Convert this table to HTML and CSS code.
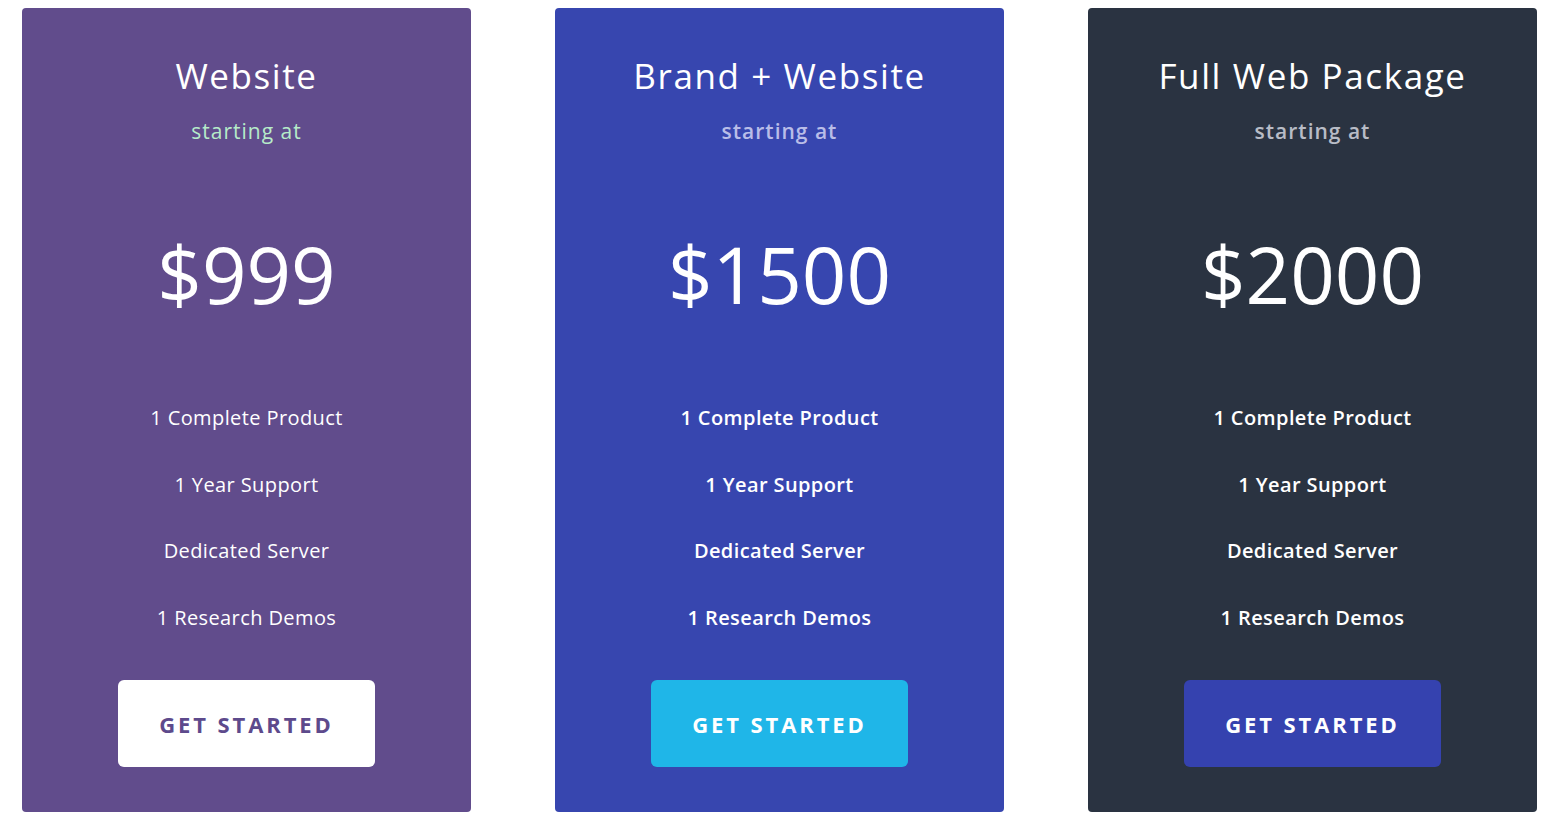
FILE: index.html
```html
<!DOCTYPE html>
<html>
<head>
<meta charset="utf-8">
<link rel="stylesheet" href="styles.css">
</head>
<body>
<div class="pricing">
  <div class="card card-purple">
    <h2 class="title">Website</h2>
    <div class="starting">starting at</div>
    <div class="price">$999</div>
    <ul class="features">
      <li>1 Complete Product</li>
      <li>1 Year Support</li>
      <li>Dedicated Server</li>
      <li>1 Research Demos</li>
    </ul>
    <a class="btn">GET STARTED</a>
  </div>
  <div class="card card-blue">
    <h2 class="title">Brand + Website</h2>
    <div class="starting">starting at</div>
    <div class="price">$1500</div>
    <ul class="features">
      <li>1 Complete Product</li>
      <li>1 Year Support</li>
      <li>Dedicated Server</li>
      <li>1 Research Demos</li>
    </ul>
    <a class="btn">GET STARTED</a>
  </div>
  <div class="card card-dark">
    <h2 class="title">Full Web Package</h2>
    <div class="starting">starting at</div>
    <div class="price">$2000</div>
    <ul class="features">
      <li>1 Complete Product</li>
      <li>1 Year Support</li>
      <li>Dedicated Server</li>
      <li>1 Research Demos</li>
    </ul>
    <a class="btn">GET STARTED</a>
  </div>
</div>
</body>
</html>
```
FILE: styles.css
```css
html, body {
  margin: 0;
  padding: 0;
  background: #ffffff;
}
.pricing {
  display: flex;
  gap: 84px;
  padding: 8px 0 0 22px;
}
.card {
  width: 449px;
  height: 804px;
  border-radius: 4px;
  display: flex;
  flex-direction: column;
  align-items: center;
  color: #ffffff;
  box-sizing: border-box;
}
.card-purple { background: #614c8c; }
.card-blue { background: #3746af; }
.card-dark { background: #2a3341; }
.title {
  margin: 48px 0 0;
  font-family: "Open Sans", sans-serif;
  font-weight: 400;
  font-size: 35px;
  line-height: 40px;
  letter-spacing: 1.6px;
}
.starting {
  margin-top: 22px;
  font-family: "Open Sans", sans-serif;
  font-size: 21px;
  line-height: 26px;
  letter-spacing: 1px;
}
.card-purple .starting { color: #b6ebc9; }
.card-blue .starting { color: #b9bde8; font-weight: 600; }
.card-dark .starting { color: #b8bcc6; font-weight: 600; }
.price {
  margin-top: 85px;
  font-family: "Open Sans", sans-serif;
  font-size: 78px;
  line-height: 90px;
  font-weight: 400;
}
.features {
  list-style: none;
  margin: 85px 0 0;
  padding: 0;
  display: flex;
  flex-direction: column;
  align-items: center;
  gap: 39.7px;
  font-family: "Open Sans", sans-serif;
  font-size: 20px;
  line-height: 27px;
  letter-spacing: 0.4px;
}
.card-blue .features, .card-dark .features { font-weight: 600; }
.btn {
  margin-top: 49px;
  width: 257px;
  height: 87px;
  border-radius: 6px;
  display: flex;
  align-items: center;
  justify-content: center;
  font-family: "Open Sans", sans-serif;
  font-weight: 700;
  font-size: 22px;
  letter-spacing: 2.9px;
  box-sizing: border-box;
}
.card-purple .btn { background: #ffffff; color: #5d4a8c; }
.card-blue .btn { background: #1fb6e8; color: #ffffff; }
.card-dark .btn { background: #3542af; color: #ffffff; }
```
